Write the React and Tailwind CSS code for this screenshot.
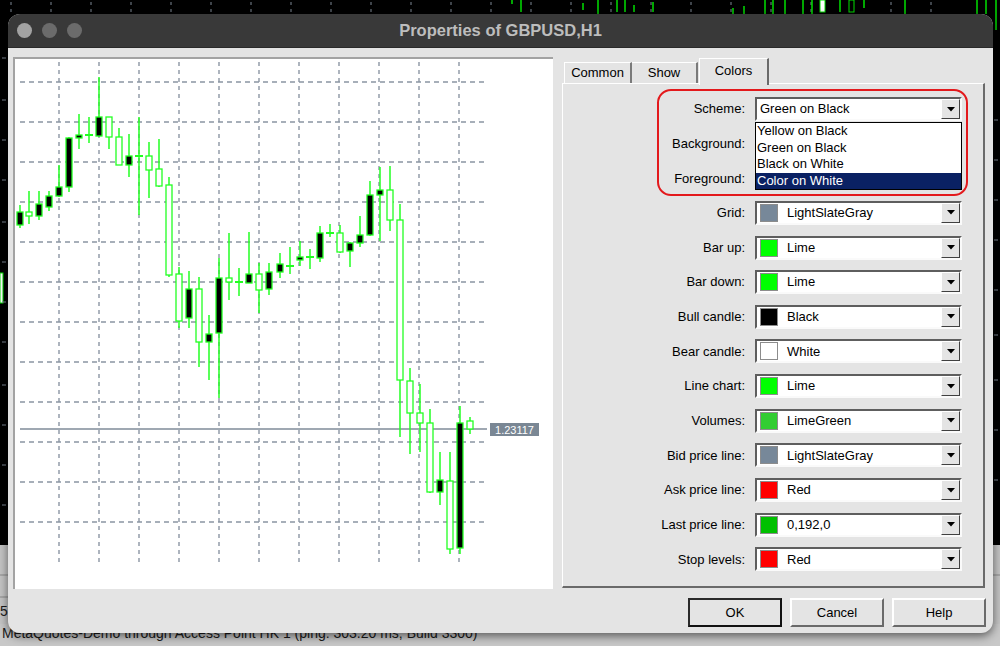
import React from "react";

// candle: [x, high, low, bodyTop, bodyBottom, kind]  kind: b = black body, w = white body, d = doji
const candles = [
  [20, 205, 228, 212, 225, "b"],
  [29, 191, 224, 212, 216, "w"],
  [39, 191, 220, 204, 216, "b"],
  [49, 191, 211, 196, 207, "b"],
  [59, 165, 197, 187, 196, "b"],
  [69, 137, 192, 138, 187, "b"],
  [79, 114, 149, 135, 138, "b"],
  [89, 117, 143, 135, 135, "d"],
  [99, 77, 137, 117, 136, "b"],
  [109, 117, 149, 117, 137, "w"],
  [119, 128, 165, 137, 165, "w"],
  [129, 134, 177, 156, 165, "b"],
  [139, 117, 215, 156, 156, "d"],
  [149, 142, 198, 156, 170, "w"],
  [159, 139, 187, 169, 186, "w"],
  [169, 177, 277, 185, 275, "w"],
  [179, 267, 328, 274, 321, "w"],
  [189, 271, 328, 289, 318, "b"],
  [199, 277, 367, 289, 342, "w"],
  [209, 315, 380, 334, 342, "b"],
  [219, 258, 398, 278, 333, "b"],
  [229, 233, 300, 278, 282, "w"],
  [239, 268, 296, 282, 282, "d"],
  [249, 232, 283, 274, 283, "b"],
  [259, 263, 313, 274, 290, "w"],
  [269, 263, 295, 272, 289, "b"],
  [280, 253, 278, 264, 272, "b"],
  [290, 247, 274, 266, 266, "d"],
  [300, 241, 266, 257, 260, "b"],
  [310, 249, 269, 257, 257, "d"],
  [320, 226, 262, 233, 258, "b"],
  [330, 224, 237, 233, 233, "d"],
  [340, 225, 253, 233, 252, "w"],
  [350, 242, 267, 243, 251, "b"],
  [360, 216, 247, 235, 243, "b"],
  [370, 181, 236, 195, 235, "b"],
  [380, 167, 241, 190, 195, "b"],
  [390, 166, 231, 190, 220, "w"],
  [400, 204, 437, 220, 380, "w"],
  [410, 368, 454, 381, 413, "w"],
  [420, 384, 452, 413, 423, "w"],
  [430, 409, 493, 423, 492, "w"],
  [440, 452, 505, 480, 492, "b"],
  [450, 452, 554, 481, 549, "w"],
  [460, 406, 554, 423, 548, "b"],
  [470, 417, 434, 421, 429, "w"],
];

const vLines = [59, 99, 139, 179, 219, 259, 299, 339, 379, 419, 459];
const hLines = [82, 122, 162, 202, 242, 282, 322, 362, 402, 442, 482, 522];

// Background and Foreground sit under the open scheme list, so their boxes stay empty
const rows = [
  { label: "Background:" },
  { label: "Foreground:" },
  { label: "Grid:", swatch: "bg-[#778899]", text: "LightSlateGray" },
  { label: "Bar up:", swatch: "bg-[#00ff00]", text: "Lime" },
  { label: "Bar down:", swatch: "bg-[#00ff00]", text: "Lime" },
  { label: "Bull candle:", swatch: "bg-black", text: "Black" },
  { label: "Bear candle:", swatch: "bg-white", text: "White" },
  { label: "Line chart:", swatch: "bg-[#00ff00]", text: "Lime" },
  { label: "Volumes:", swatch: "bg-[#32cd32]", text: "LimeGreen" },
  { label: "Bid price line:", swatch: "bg-[#778899]", text: "LightSlateGray" },
  { label: "Ask price line:", swatch: "bg-[#ff0000]", text: "Red" },
  { label: "Last price line:", swatch: "bg-[#00c000]", text: "0,192,0" },
  { label: "Stop levels:", swatch: "bg-[#ff0000]", text: "Red" },
];

function Chart() {
  return (
    <svg width="538" height="530" viewBox="15 59 538 530" className="block">
      <rect x="15" y="59" width="538" height="530" fill="#ffffff" />
      {vLines.map((x) => (
        <line key={"v" + x} x1={x} y1="62" x2={x} y2="563" stroke="#8b95a3" strokeWidth="1.4" strokeDasharray="4 4" />
      ))}
      {hLines.map((y) => (
        <line key={"h" + y} x1="20" y1={y} x2="487" y2={y} stroke="#8b95a3" strokeWidth="1.4" strokeDasharray="5 4" />
      ))}
      <line x1="20" y1="429" x2="487" y2="429" stroke="#7f8b99" strokeWidth="1.5" />
      {candles.map(([x, hi, lo, top, bot, kind]) => (
        <g key={"c" + x}>
          <line x1={x} y1={hi} x2={x} y2={lo} stroke="#22ff22" strokeWidth="1.5" />
          {kind === "d" ? (
            <line x1={x - 4} y1={top} x2={x + 4} y2={top} stroke="#22ff22" strokeWidth="2" />
          ) : (
            <rect
              x={x - 3}
              y={top}
              width="6"
              height={Math.max(bot - top, 3)}
              fill={kind === "b" ? "#000000" : "#ffffff"}
              stroke="#22ff22"
              strokeWidth="1.3"
            />
          )}
        </g>
      ))}
      <rect x="490" y="423" width="49" height="13" fill="#7a8794" />
      <text x="514.5" y="433.5" textAnchor="middle" fontSize="11" fill="#ffffff" fontFamily="Liberation Sans, sans-serif">
        1.23117
      </text>
    </svg>
  );
}

function Arrow() {
  return (
    <span className="absolute right-0 top-0 flex h-[20px] w-[19px] items-center justify-center border border-t-white border-l-white border-b-[#404040] border-r-[#404040] bg-[#e4e4e4]">
      <svg width="8" height="5" viewBox="0 0 8 5">
        <polygon points="0,0 8,0 4,4.5" fill="#000000" />
      </svg>
    </span>
  );
}

function Combo({ swatch, text }) {
  return (
    <div className="relative flex h-[24px] w-[207px] items-center border-2 border-t-[#5e5e5e] border-l-[#5e5e5e] border-b-[#fafafa] border-r-[#fafafa] bg-white">
      {swatch ? <span className={"ml-[3px] h-[18px] w-[18px] border border-[#8c8c8c] " + swatch} /> : null}
      {text ? <span className={swatch ? "ml-[9px]" : "ml-[3px]"}>{text}</span> : null}
      <Arrow />
    </div>
  );
}

function Row({ label, children }) {
  return (
    <div className="flex h-[24px] items-center">
      <span className="w-[182px] text-right">{label}</span>
      <span className="ml-[10px]">{children}</span>
    </div>
  );
}

function Button({ children, primary }) {
  return (
    <div
      className={
        "flex h-[29px] w-[94px] items-center justify-center bg-[#e4e4e4] " +
        (primary
          ? "border-2 border-t-[#2a2a2a] border-l-[#2a2a2a] border-b-[#111111] border-r-[#111111]"
          : "border-2 border-t-white border-l-white border-b-[#6a6a6a] border-r-[#6a6a6a]")
      }
    >
      {children}
    </div>
  );
}

function Desktop() {
  const ticks = [11, 51, 91, 131, 171, 211, 251, 291, 331, 371, 411, 451, 491, 531, 571, 611, 651, 691, 731, 771, 811, 851, 891, 931];
  const greens = [
    [512, 0, 4], [521, 0, 12], [583, 3, 10], [598, 0, 14], [617, 0, 12], [625, 0, 12], [634, 5, 12], [653, 2, 12],
    [733, 8, 14], [744, 6, 14], [765, 0, 14], [773, 0, 14], [785, 0, 14], [803, 0, 14], [812, 0, 14], [840, 0, 12],
    [864, 0, 8], [905, 0, 14], [977, 0, 14], [986, 0, 14], [996, 0, 30],
  ];
  return (
    <svg width="1000" height="646" className="absolute inset-0">
      <rect width="1000" height="646" fill="#000000" />
      {ticks.map((x) => (
        <line key={"t" + x} x1={x} y1="2" x2={x} y2="13" stroke="#7d8794" strokeWidth="1" strokeDasharray="3 4" />
      ))}
      {greens.map(([x, y1, y2]) => (
        <line key={"g" + x} x1={x} y1={y1} x2={x} y2={y2} stroke="#00e000" strokeWidth="1.5" />
      ))}
      <rect x="820" y="0" width="5" height="12" fill="#ffffff" stroke="#00e000" />
      <rect x="849" y="0" width="5" height="12" fill="#000000" stroke="#00e000" />
      <rect x="0" y="273" width="3" height="30" fill="#ffffff" stroke="#00e000" />
      {[58, 100, 140, 180, 222, 262, 302, 342, 385, 425, 465, 505].map((y) => (
        <line key={"l" + y} x1="2" y1={y} x2="6" y2={y} stroke="#7d8794" />
      ))}
      {[120, 160, 200, 240, 290, 335, 380, 430, 480].map((y) => (
        <line key={"r" + y} x1="994" y1={y} x2="998" y2={y} stroke="#7d8794" />
      ))}
      <rect x="0" y="545" width="10" height="101" fill="#c4c4c4" />
      <line x1="0" y1="575" x2="10" y2="575" stroke="#8a8a8a" />
      <line x1="0" y1="597" x2="10" y2="597" stroke="#8a8a8a" />
      <rect x="990" y="545" width="10" height="101" fill="#c4c4c4" />
      <line x1="990" y1="575" x2="1000" y2="575" stroke="#8a8a8a" />
      <rect x="0" y="624" width="1000" height="22" fill="#c8c8c8" />
    </svg>
  );
}

export default function App() {
  return (
    <div className="relative h-[646px] w-[1000px] overflow-hidden bg-black text-[13px] text-black [font-family:'Liberation_Sans',Arial,sans-serif]">
      <Desktop />

      {/* status bar text, top half hidden under the dialog */}
      <div className="absolute left-[2px] top-[624px] text-[14px] leading-[18px] text-[#1a1a1a]">
        MetaQuotes-Demo through Access Point HK 1 (ping: 303.20 ms, Build 3300)
      </div>
      <div className="absolute left-0 top-[603px] text-[14px] leading-[16px] text-[#1a1a1a]">5</div>

      {/* dialog window */}
      <div className="absolute left-[8px] top-[14px] flex h-[619px] w-[985px] flex-col overflow-hidden rounded-[12px] bg-[#e4e4e4] shadow-[0_3px_10px_rgba(0,0,0,0.55)]">
        <div className="relative flex h-[34px] shrink-0 items-center border-b border-[#2a2a2a] bg-[#393939]">
          <div className="ml-[9px] flex gap-[10px]">
            <span className="h-[15px] w-[15px] rounded-full bg-[#a2a2a2]" />
            <span className="h-[15px] w-[15px] rounded-full bg-[#6b6b6b]" />
            <span className="h-[15px] w-[15px] rounded-full bg-[#6b6b6b]" />
          </div>
          <div className="absolute inset-0 flex items-center justify-center text-[16.5px] font-bold text-[#bdbdbd]">
            Properties of GBPUSD,H1
          </div>
        </div>

        <div className="flex flex-1 items-start pl-[5px]">
          <div className="mt-[9px] border-t-2 border-l-2 border-[#a3a3a3]">
            <Chart />
          </div>

          <div className="ml-[9px] mt-[10px] flex w-[424px] flex-col">
            {/* tabs */}
            <div className="relative z-10 flex h-[25px] items-end pl-[2px]">
              <div className="flex h-[21px] w-[68px] items-center justify-center border-t border-l border-r-2 border-t-white border-l-white border-r-[#7a7a7a] bg-[#e4e4e4]">
                Common
              </div>
              <div className="flex h-[21px] w-[66px] items-center justify-center border-t border-r-2 border-t-white border-r-[#7a7a7a] bg-[#e4e4e4]">
                Show
              </div>
              <div className="-mb-[2px] ml-[1px] flex h-[27px] w-[70px] items-center justify-center border-t border-l border-r-2 border-t-white border-l-white border-r-[#6a6a6a] bg-[#e4e4e4] pb-[3px]">
                Colors
              </div>
            </div>

            {/* panel */}
            <div className="relative h-[505px] w-[423px] border-t border-l border-r-2 border-b-2 border-t-white border-l-white border-r-[#6a6a6a] border-b-[#6a6a6a]">
              <div className="flex flex-col gap-[10.65px] pt-[13px]">
                <Row label="Scheme:">
                  <Combo text="Green on Black" />
                </Row>
                {rows.map((r) => (
                  <Row key={r.label} label={r.label}>
                    <Combo swatch={r.swatch} text={r.text} />
                  </Row>
                ))}
              </div>

              {/* open dropdown list */}
              <div className="absolute left-[192px] top-[38px] flex w-[207px] flex-col border border-black bg-white leading-[16.5px]">
                <span className="pl-[1px]">Yellow on Black</span>
                <span className="pl-[1px]">Green on Black</span>
                <span className="pl-[1px]">Black on White</span>
                <span className="bg-[#0a2163] pl-[1px] text-white">Color on White</span>
              </div>

              {/* red highlight */}
              <div className="absolute left-[94px] top-[5px] h-[107px] w-[311px] rounded-[14px] border-2 border-[#e3191c]" />
            </div>

            {/* buttons */}
            <div className="mt-[10px] flex justify-end gap-[8px]">
              <Button primary>OK</Button>
              <Button>Cancel</Button>
              <Button>Help</Button>
            </div>
          </div>
        </div>
      </div>
    </div>
  );
}
